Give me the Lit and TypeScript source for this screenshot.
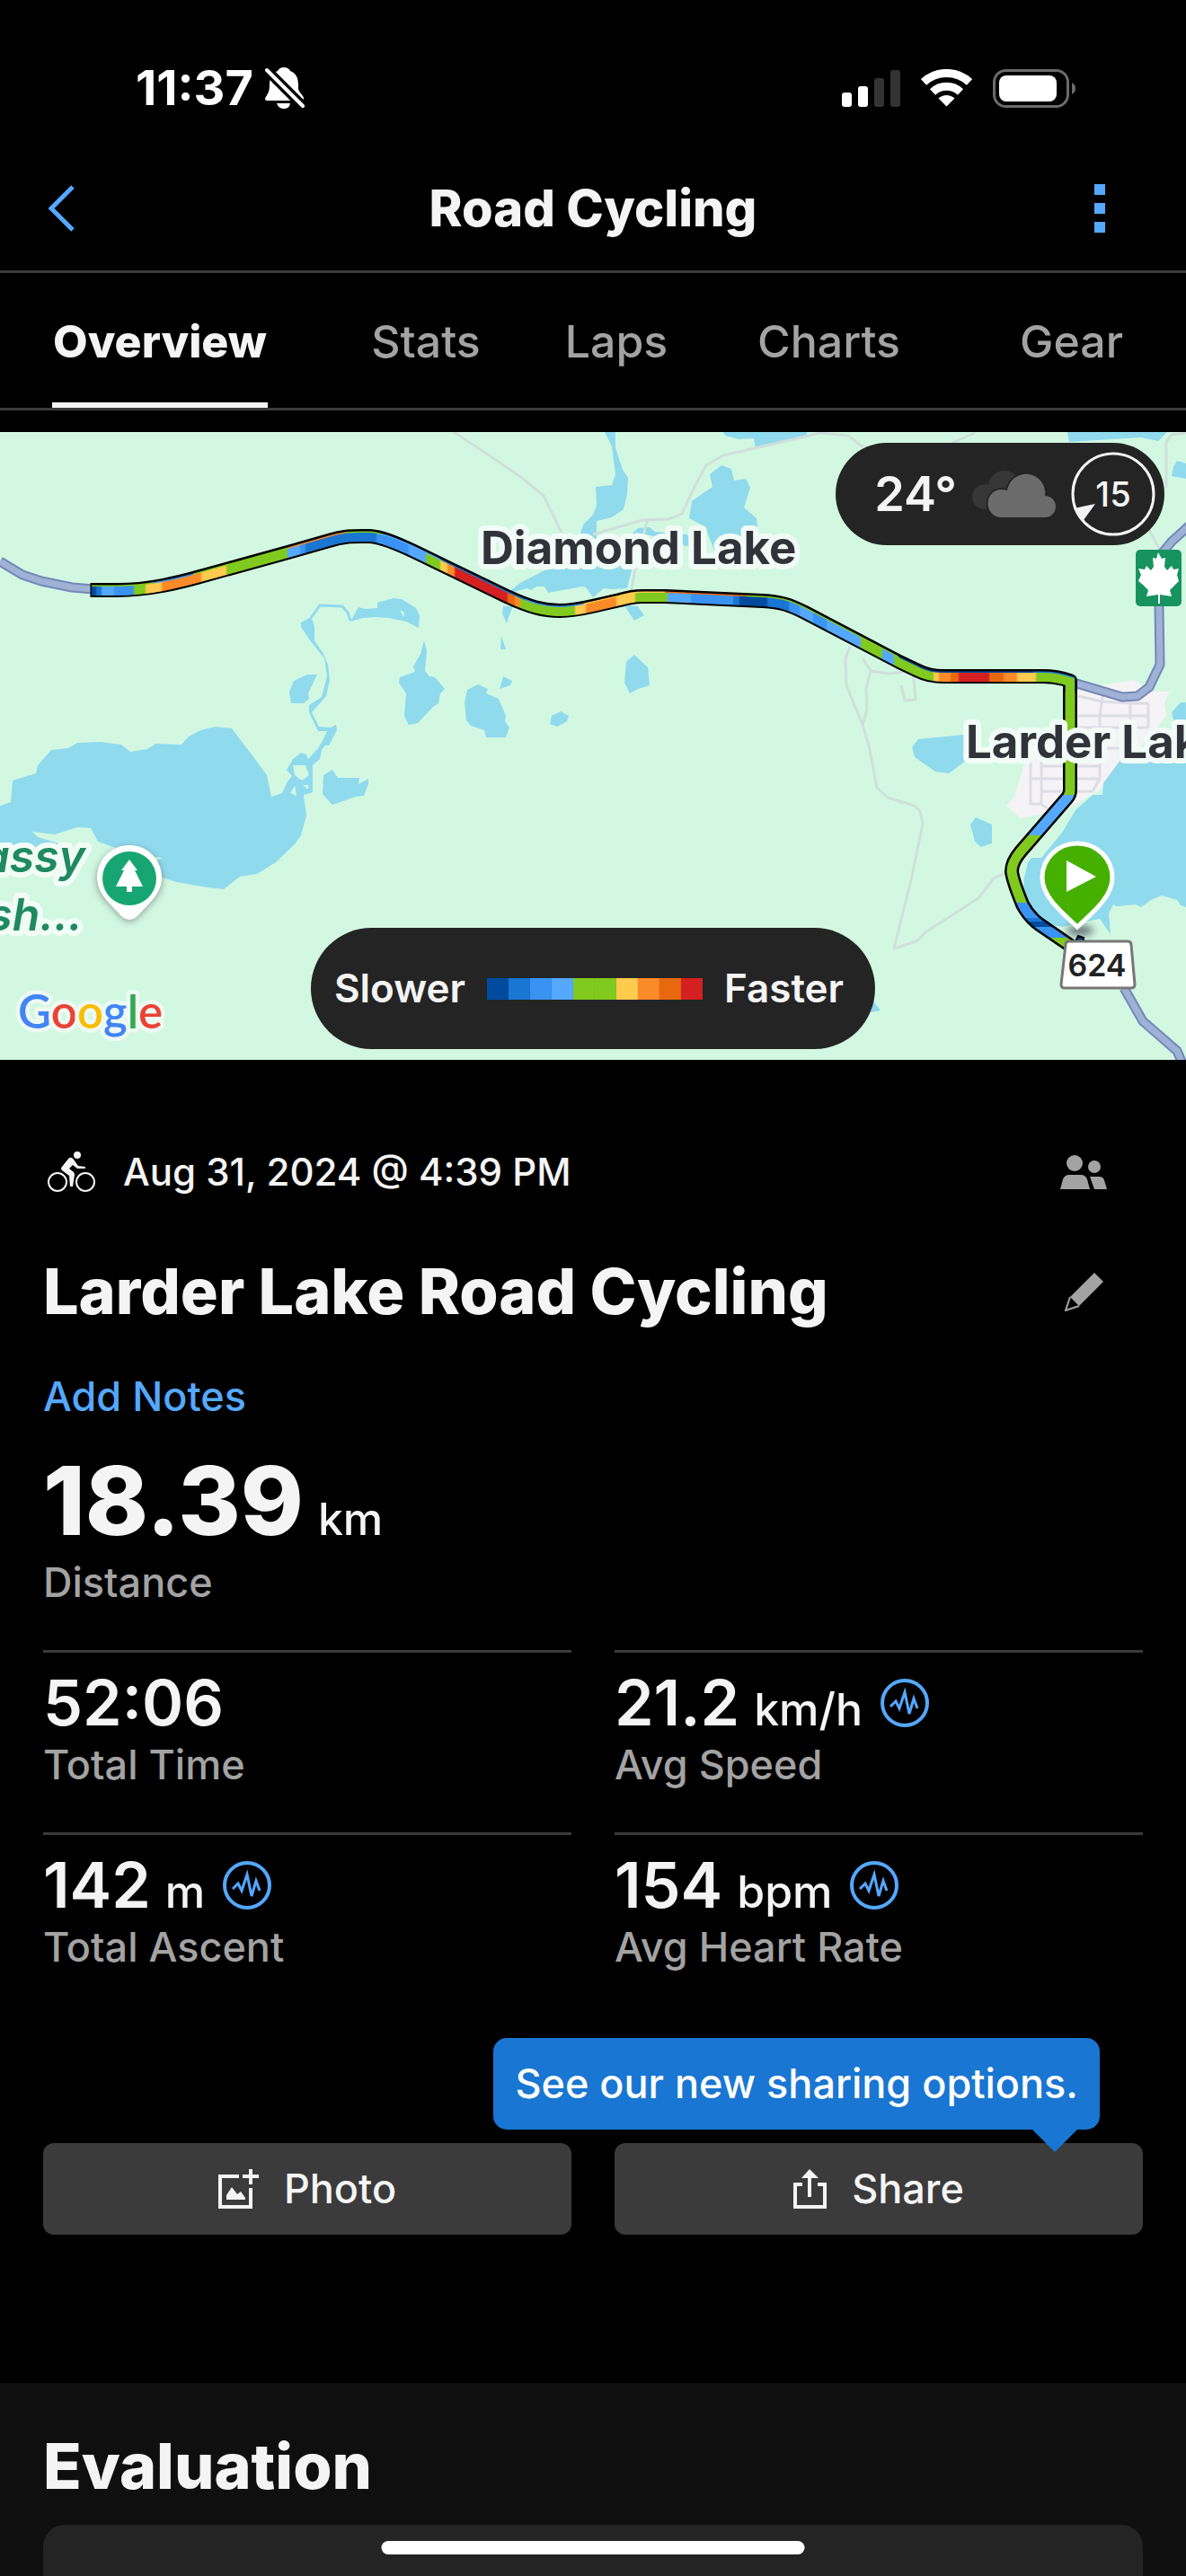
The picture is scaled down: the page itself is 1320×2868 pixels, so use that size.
import { LitElement, html, svg, css, nothing } from "lit";
import { customElement, property, state } from "lit/decorators.js";
import { classMap } from "lit/directives/class-map.js";

const WATER = [
  "0,897 12,893 14,869 40,861 42,852 57,835 76,833 86,827 112,826 135,829 145,837 164,834 173,828 202,829 210,820 223,813 240,809 258,811 267,823 280,840 297,863 302,887 314,883 320,870 325,864 319,857 326,845 335,838 341,840 343,845 354,833 362,820 370,820 358,835 356,845 348,852 348,882 338,885 341,908 335,930 328,940 307,960 286,973 267,976 249,990 231,988 196,982 181,977 170,960 181,955 162,953 126,943 109,937 101,922 86,921 61,929 36,926 42,932 65,939 60,945 0,942",
  "346,687 350,697 350,713 360,728 365,740 367,757 363,775 357,782 347,793 355,809 368,810 374,807 375,813 366,830 357,829 364,814 354,814 344,793 344,785 358,776 364,753 361,733 345,713 335,698 335,693",
  "390,692 399,676 406,678 420,677 420,671 438,666 447,667 463,677 467,685 466,699 452,692 433,688 417,687 404,688",
  "353,751 342,751 327,758 322,770 324,783 338,783 344,778 343,772",
  "472,713 475,725 473,747 478,753 484,754 495,767 490,772 488,783 482,787 465,805 455,807 450,797 452,772 444,760 445,754 462,748 460,742 468,728",
  "532,762 543,767 541,772 555,778 563,797 562,803 567,810 563,821 541,821 539,813 524,808 519,802 517,782 520,768",
  "560,753 570,758 568,763 556,767",
  "624,792 633,797 631,803 620,809 612,806 614,797",
  "558,708 563,723 557,723",
  "560,675 571,675 566,687 564,694 559,683",
  "569,657 579,649 606,635 631,630 645,622 652,600 646,593 650,583 660,573 664,563 663,542 681,540 685,528 681,497 673,481 685,481 685,498 693,523 699,532 698,550 694,567 681,576 664,580 664,600 685,615 705,627 698,655 682,656 672,655 660,665 652,654 648,653 610,660 606,653 597,653 591,657 587,655 568,660",
  "803,518 814,522 817,535 830,533 835,543 828,565 842,577 843,587 828,597 816,603 795,613 788,595 786,587 767,577 770,558 784,548 793,542 790,528",
  "700,597 710,588 723,587 729,592 765,595 770,607 763,608 748,600 728,597 708,593",
  "805,481 898,481 898,487 866,493 841,500 839,488 822,489 807,485",
  "1188,481 1299,481 1289,491 1270,487 1190,492",
  "1310,513 1320,516 1320,533 1304,530 1306,520",
  "1314,782 1320,782 1320,803 1306,802 1304,793",
  "694,673 710,675 717,685 706,691",
  "706,729 721,743 723,763 710,767 701,772 695,760 697,737",
  "1022,823 1072,818 1078,830 1075,847 1056,861 1041,859 1018,843 1015,832",
  "1086,910 1104,918 1104,939 1092,943 1085,937 1080,918",
  "1247,846 1320,846 1320,1010 1314,1008 1310,1002 1293,997 1281,1002 1270,1010 1264,1007 1243,1009 1239,1007 1234,1017 1236,1040 1224,1023 1205,1027 1182,1032 1163,1028 1148,1013 1138,997 1140,977 1144,960 1148,955 1159,955 1182,927 1197,902 1216,885 1227,885 1228,872",
  "971,1113 980,1125 969,1127",
  "370,857 376,866 400,866 399,873 410,867 410,873 405,886 396,887 370,896 359,884 360,863",
];

const ISLANDS = [
  "326,852 340,852 344,863 336,869 328,863",
  "328,875 330,886 323,883",
  "337,874 343,874 343,879",
  "445,679 450,682 449,687",
];

const STREAMS = ["346,688 356,674 381,675 387,682 390,691"];

const TRAILS = [
  "505,481 537,502 581,532 605,552 625,593",
  "660,595 715,579 744,578 759,572 774,540 786,518 805,507 866,493 913,482 944,485 961,498",
  "1060,493 1085,482",
  "1320,482 1304,484 1298,492 1298,543",
  "1279,590 1291,612",
  "702,660 707,633 721,577",
  "946,720 941,733 942,763 960,807 967,830 976,877 988,888 1018,897 1024,903 1027,917 1014,980 995,1056 1020,1048 1030,1038 1089,1000 1106,978 1119,972",
  "960,807 965,790 964,767 969,747 960,733",
  "969,747 988,750 1016,747 1019,779 1007,780 1003,763",
];

const STREETS = [
  "1200,775 1226,781 1258,783 1278,783",
  "1200,797 1278,797",
  "1200,810 1278,810",
  "1228,770 1224,797 1224,867 1216,881 1159,881",
  "1258,777 1258,825",
  "1278,783 1278,810",
  "1147,846 1147,895 1158,895 1166,900",
  "1159,846 1159,895",
  "1147,867 1224,867",
  "1159,853 1224,853",
  "1224,833 1262,833",
];

const HIGHWAYS = [
  "0,625 25,640 46,647 80,654 104,656",
  "1326,583 1304,603 1290,620 1290,675 1291,740 1279,765 1266,775 1249,776 1195,760",
  "1251,1100 1272,1137 1310,1170 1316,1184",
];

const ROUTE =
  "M102 657H130C150 657 165 655 181 652C196 649 205 647 219 643L324 614L366 602C385 596 395 597 412 597C425 598 440 604 463 615L564 664C590 676 605 680 623 680C640 680 650 677 668 673L690 668C700 665 705 664 715 664L740 664L849 669C870 670 880 674 896 682L1001 737L1022 747C1030 751 1040 753 1050 753H1161C1175 753 1185 756 1191 758V880Q1191 884 1188 888L1136 948Q1126 960 1126 970Q1127 980 1138 1007Q1146 1022 1158 1030L1196 1056";

type Stop = [number, string];

const C = {
  navy: "#004b9e",
  blue: "#1976d2",
  mid: "#3a92f2",
  sky: "#54a8ff",
  green: "#80c91f",
  yellow: "#ffca4d",
  orange: "#fb8a28",
  deep: "#e8680f",
  red: "#d42020",
};

// Each entry gives the coordinate where a colour ends.
const RETURN_LEG: Stop[] = [
  [107, C.navy], [113, C.blue], [127, C.sky], [149, C.mid], [162, C.green], [180, C.yellow],
  [224, C.orange], [252, C.yellow], [320, C.green], [334, C.sky], [340, C.mid], [419, C.blue],
  [455, C.mid], [474, C.sky], [490, C.green], [498, C.yellow], [506, C.orange], [565, C.red],
  [573, C.deep], [579, C.orange], [640, C.green], [652, C.yellow], [686, C.orange], [707, C.yellow],
  [743, C.green], [769, C.sky], [816, C.mid], [823, C.blue], [854, C.navy], [878, C.blue],
  [890, C.mid], [905, C.sky], [920, C.mid], [958, C.sky], [982, C.green], [995, C.sky],
  [1039, C.green], [1045, C.yellow], [1058, C.orange], [1067, C.deep], [1101, C.red],
  [1117, C.deep], [1132, C.orange], [1153, C.yellow], [1320, C.green],
];

const OUTWARD_LEG: Stop[] = [
  [170, C.green], [215, C.mid], [320, C.green], [385, C.orange], [425, C.green], [490, C.sky],
  [585, C.blue], [650, C.mid], [740, C.yellow], [830, C.deep], [930, C.green], [1000, C.green],
  [1150, C.navy], [1320, C.blue],
];

const SOUTH_LEG: Stop[] = [
  [885, C.green], [930, C.sky], [1005, C.green], [1022, C.mid], [1026, C.blue], [1032, C.navy],
  [1044, C.mid], [1120, C.green],
];

const stops = (list: Stop[], from: number, to: number) => {
  let prev = from;
  return list.map(([end, color]) => {
    const a = (prev - from) / (to - from);
    const b = (end - from) / (to - from);
    prev = end;
    return svg`<stop offset=${a + 0.001} stop-color=${color}></stop><stop offset=${b - 0.001} stop-color=${color}></stop>`;
  });
};

const SCALE = [C.navy, C.blue, C.mid, C.sky, C.green, C.green, C.yellow, C.orange, C.deep, C.red];

@customElement("route-map")
class RouteMap extends LitElement {
  static styles = css`
    :host {
      display: block;
      position: relative;
    }
    .canvas {
      display: block;
      width: 100%;
      height: auto;
    }
    .label {
      font-family: Inter, "Liberation Sans", sans-serif;
      paint-order: stroke;
      stroke: #f2fcf7;
      stroke-width: 12px;
      stroke-linejoin: round;
    }
    .place {
      font-size: 51px;
      font-weight: 700;
      fill: #32333a;
    }
    .park {
      font-size: 50px;
      font-weight: 600;
      font-style: italic;
      fill: #1f8a61;
    }
    .shield {
      font-family: Inter, "Liberation Sans", sans-serif;
      font-size: 34px;
      font-weight: 600;
      fill: #222;
    }
    .brand {
      font-family: Lato, "Liberation Sans", sans-serif;
      font-size: 51px;
      font-weight: 600;
      paint-order: stroke;
      stroke: #eef9f3;
      stroke-width: 9px;
      stroke-linejoin: round;
    }
    .pill {
      position: absolute;
      display: flex;
      align-items: center;
      background: #242424;
      color: #f4f4f4;
    }
    .weather {
      top: 12px;
      right: 24px;
      gap: 17px;
      padding: 10px 10px 10px 43px;
      border-radius: 58px;
    }
    .temp {
      font-size: 54px;
      line-height: 60px;
      font-weight: 600;
    }
    .wind {
      display: grid;
      place-items: center;
    }
    .wind svg,
    .wind span {
      grid-area: 1 / 1;
    }
    .wind span {
      font-size: 38px;
      line-height: 48px;
      font-weight: 500;
    }
    .legend {
      bottom: 12px;
      left: 50%;
      transform: translateX(-50%);
      gap: 24px;
      padding: 38px 35px 38px 26px;
      border-radius: 68px;
      font-size: 44px;
      line-height: 59px;
      font-weight: 600;
    }
    .scale {
      display: flex;
    }
    .scale i {
      width: 24px;
      height: 24px;
    }
    svg {
      display: block;
    }
  `;

  render() {
    return html`
      <svg class="canvas" viewBox="0 481 1320 699" role="img" aria-label="Route map">
        <defs>
          <linearGradient id="back" gradientUnits="userSpaceOnUse" x1="102" x2="1320" y1="0" y2="0">${stops(RETURN_LEG, 102, 1320)}</linearGradient>
          <linearGradient id="out" gradientUnits="userSpaceOnUse" x1="102" x2="1320" y1="0" y2="0">${stops(OUTWARD_LEG, 102, 1320)}</linearGradient>
          <linearGradient id="south" gradientUnits="userSpaceOnUse" x1="0" x2="0" y1="757" y2="1120">${stops(SOUTH_LEG, 757, 1120)}</linearGradient>
          <clipPath id="upper"><rect x="0" y="481" width="1320" height="290"></rect></clipPath>
          <clipPath id="lower"><rect x="0" y="771" width="1320" height="409"></rect></clipPath>
          <filter id="soft" x="-50%" y="-50%" width="200%" height="200%"><feGaussianBlur stdDeviation="4"></feGaussianBlur></filter>
        </defs>
        <rect y="481" width="1320" height="699" fill="#d3f8e2"></rect>
        <polygon fill="#f5f3f6" points="1191,755 1226,763 1262,757 1283,770 1302,770 1296,783 1298,797 1280,820 1262,838 1247,846 1224,880 1203,892 1182,903 1155,907 1136,911 1120,897 1129,887 1140,850 1150,820 1191,810"></polygon>
        ${WATER.map((p) => svg`<polygon fill="#90daee" points=${p}></polygon>`)}
        ${ISLANDS.map((p) => svg`<polygon fill="#d3f8e2" points=${p}></polygon>`)}
        ${STREAMS.map((p) => svg`<polyline fill="none" stroke="#90daee" stroke-width="3" points=${p}></polyline>`)}
        ${TRAILS.map((p) => svg`<polyline fill="none" stroke="#d0dfdc" stroke-width="3" stroke-linejoin="round" points=${p}></polyline>`)}
        ${STREETS.map((p) => svg`<polyline fill="none" stroke="#dddde6" stroke-width="3" points=${p}></polyline>`)}
        ${HIGHWAYS.map((p) => svg`
          <polyline fill="none" stroke="#7488b8" stroke-width="11" stroke-linejoin="round" points=${p}></polyline>
          <polyline fill="none" stroke="#9fb2d6" stroke-width="7" stroke-linejoin="round" points=${p}></polyline>`)}
        <path d=${ROUTE} fill="none" stroke="#000" stroke-width="16" stroke-linejoin="round"></path>
        <path d="M1196 1050l4-8l6 2v10z" fill="#0b3f86" stroke="#000" stroke-width="2"></path>
        <path d="M102 649v16" stroke="#000" stroke-width="3"></path>
        <g clip-path="url(#upper)" fill="none">
          <path d=${ROUTE} stroke="url(#out)" stroke-width="11"></path>
          <path d=${ROUTE} stroke="url(#back)" stroke-width="10" transform="translate(0 1)"></path>
        </g>
        <path clip-path="url(#lower)" d=${ROUTE} stroke="url(#south)" stroke-width="11" fill="none"></path>

        <text class="label place" x="535" y="628">Diamond Lake</text>
        <text class="label place" x="1075" y="844">Larder Lake</text>
        <text class="label park" x="95" y="971" text-anchor="end">assy</text>
        <text class="label park" x="92" y="1036" text-anchor="end">sh...</text>

        <g>
          <path d="M144 944c-20 0-36 16-36 35c0 12 6 20 14 28l14 15q8 7 16 0l14-15c8-8 14-16 14-28c0-19-16-35-36-35z" fill="#4b5a55" opacity="0.6" filter="url(#soft)"></path>
          <path d="M144 941c-20 0-36 16-36 36c0 12 6 20 13 28l15 16q8 6 16 0l15-16c7-8 13-16 13-28c0-20-16-36-36-36z" fill="#fff"></path>
          <circle cx="144" cy="978" r="30" fill="#17a673"></circle>
          <path d="M144 957l9 12h-3l9 18h-12v6h-6v-6h-12l9-18h-3z" fill="#fff"></path>
        </g>

        <text class="brand" x="20" y="1145"><tspan fill="#4285f4">G</tspan><tspan fill="#ea4335">o</tspan><tspan fill="#fbbc05">o</tspan><tspan fill="#4285f4">g</tspan><tspan fill="#34a853">l</tspan><tspan fill="#ea4335">e</tspan></text>

        <g>
          <rect x="1264" y="612" width="51" height="63" rx="5" fill="#17935f"></rect>
          <path d="M1289 615l4 7l4-1l-1 10l3 4l5-5l2 4l6-1l-2 7l2 7l-4 4l-6 6l2 7l-13-2v10h-2v-10l-13 2l2-7l-6-6l-5-4l3-7l-3-7l7 1l2-4l5 5l3-4l-1-10l4 1z" fill="#fff"></path>
        </g>

        <ellipse cx="1202" cy="1036" rx="15" ry="6" fill="#223" opacity="0.6" filter="url(#soft)"></ellipse>
        <path d="M1199 939c-22 0-39 17-39 38c0 19 16 34 39 55c23-21 39-36 39-55c0-21-17-38-39-38z" fill="#45b000" stroke="#fff" stroke-width="5"></path>
        <path d="M1187 958v35l33-17z" fill="#fff"></path>

        <path d="M1190 1048h65q4 0 4 4l4 44q0 4-4 4h-74q-4 0-4-4l5-44q0-4 4-4z" fill="#fff" stroke="#777" stroke-width="3"></path>
        <text class="shield" x="1221" y="1087" text-anchor="middle">624</text>
      </svg>

      <div class="pill weather">
        <span class="temp">24°</span>
        <svg width="93" height="52" viewBox="0 0 93 52" aria-label="Cloudy" role="img">
          <g fill="#363636">
            <circle cx="36" cy="18" r="18"></circle>
            <circle cx="14" cy="29" r="14"></circle>
            <rect x="14" y="22" width="30" height="21"></rect>
          </g>
          <path d="M32 52a14 15 0 0 1 0-31q4 0 7 1a21 21 0 0 1 42 6a12 12 0 0 1 0 24z" fill="#6b6b6b" stroke="#242424" stroke-width="4" paint-order="stroke"></path>
        </svg>
        <div class="wind">
          <svg width="94" height="94" viewBox="0 0 94 94" aria-hidden="true">
            <circle cx="47" cy="47" r="45" fill="none" stroke="#f4f4f4" stroke-width="3"></circle>
            <path d="M3 63l24-5l-13 18z" fill="#f4f4f4"></path>
          </svg>
          <span>15</span>
        </div>
      </div>

      <div class="pill legend">
        <span>Slower</span>
        <span class="scale">${SCALE.map((c) => html`<i style="background:${c}"></i>`)}</span>
        <span>Faster</span>
      </div>
    `;
  }
}

@customElement("metric-tile")
class MetricTile extends LitElement {
  @property() value = "";
  @property() unit = "";
  @property() label = "";
  @property({ type: Boolean }) graph = false;

  static styles = css`
    :host {
      display: block;
      border-top: 3px solid #3b3b3b;
      padding: 20px 0 45px;
    }
    .line {
      display: flex;
      align-items: center;
      gap: 20px;
      line-height: 72px;
      color: #f4f4f4;
    }
    .reading {
      display: flex;
      align-items: baseline;
      gap: 16px;
      font-size: 70px;
      font-weight: 600;
    }
    .unit {
      font-size: 50px;
      line-height: 52px;
      font-weight: 500;
    }
    .label {
      margin-top: 3px;
      font-size: 45px;
      line-height: 60px;
      font-weight: 500;
      color: #a3a3a3;
    }
    .graph {
      display: block;
      padding: 0;
      border: 0;
      background: none;
    }
    svg {
      display: block;
    }
  `;

  render() {
    return html`
      <div class="line">
        <span class="reading"><span>${this.value}</span>${this.unit ? html`<span class="unit">${this.unit}</span>` : nothing}</span>
        ${this.graph
          ? html`<button class="graph" aria-label="${this.label} chart">
              <svg width="54" height="54" viewBox="0 0 54 54" fill="none" stroke="#54a8ff">
                <circle cx="27" cy="27" r="25" stroke-width="4"></circle>
                <path d="M11 31L17 25L21 33L27 15L32 39L37 22L41 33" stroke-width="3"></path>
              </svg>
            </button>`
          : nothing}
      </div>
      <div class="label">${this.label}</div>
    `;
  }
}

@customElement("app-root")
class AppRoot extends LitElement {
  @state() private tab = "Overview";

  static styles = css`
    :host {
      display: flex;
      flex-direction: column;
      min-height: 100vh;
      background: #000;
      color: #f4f4f4;
      font-family: Inter, "Liberation Sans", sans-serif;
      position: relative;
    }
    * {
      box-sizing: border-box;
    }
    button {
      font: inherit;
      color: inherit;
      background: none;
      border: 0;
      padding: 0;
      margin: 0;
    }
    svg {
      display: block;
    }
    .status {
      display: flex;
      justify-content: space-between;
      align-items: center;
      padding: 68px 123px 0 151px;
      color: #fff;
    }
    .clock {
      display: flex;
      align-items: center;
      gap: 12px;
      font-size: 54px;
      line-height: 60px;
      font-weight: 700;
    }
    .radios {
      display: flex;
      align-items: center;
      gap: 23px;
    }
    .bar {
      display: grid;
      grid-template-columns: 1fr auto 1fr;
      align-items: center;
      padding: 72px 84px 37px 50px;
      border-bottom: 3px solid #3b3b3b;
    }
    .bar h1 {
      margin: 0;
      font-size: 56px;
      line-height: 64px;
      font-weight: 800;
      padding-left: 34px;
    }
    .more {
      justify-self: end;
    }
    .tabs {
      display: grid;
      grid-template-columns: 356fr 236fr 188fr 285fr 255fr;
      justify-items: center;
      border-bottom: 3px solid #3b3b3b;
    }
    .tab {
      padding: 46px 2px 38px;
      border-bottom: 6px solid transparent;
      font-size: 50px;
      line-height: 60px;
      font-weight: 500;
      color: #a3a3a3;
    }
    .tab.on {
      padding-left: 1px;
      padding-right: 1px;
      color: #f4f4f4;
      font-weight: 800;
      border-color: #f4f4f4;
    }
    route-map {
      margin-top: 24px;
    }
    .summary {
      display: flex;
      flex-direction: column;
      padding: 95px 48px 0;
    }
    .row {
      display: flex;
      align-items: center;
    }
    .side {
      display: grid;
      place-items: center;
      width: 52px;
      margin: 0 40px 0 auto;
    }
    .when {
      gap: 30px;
      padding-left: 5px;
      font-size: 42px;
      line-height: 60px;
      font-weight: 500;
    }
    h2 {
      margin: 0;
      font-size: 70px;
      line-height: 88px;
      font-weight: 800;
    }
    .name {
      margin-top: 59px;
    }
    .notes {
      align-self: flex-start;
      margin-top: 43px;
      font-size: 45px;
      line-height: 60px;
      font-weight: 500;
      color: #54a8ff;
      text-decoration: none;
    }
    .distance {
      display: flex;
      align-items: baseline;
      gap: 16px;
      margin-top: 34px;
      font-size: 106px;
      line-height: 104px;
      font-weight: 800;
    }
    .distance span {
      font-size: 50px;
      line-height: 52px;
      font-weight: 500;
    }
    .caption {
      margin-top: 9px;
      font-size: 45px;
      line-height: 60px;
      font-weight: 500;
      color: #a3a3a3;
    }
    .metrics {
      display: grid;
      grid-template-columns: 1fr 1fr;
      column-gap: 48px;
      margin-top: 45px;
    }
    .actions {
      display: grid;
      grid-template-columns: 1fr 1fr;
      gap: 48px;
      margin: 143px 0 165px;
    }
    .slot {
      position: relative;
      display: grid;
    }
    .action {
      display: flex;
      align-items: center;
      justify-content: center;
      gap: 28px;
      padding: 21px 0;
      border-radius: 12px;
      background: #3b3b3b;
      font-size: 45px;
      line-height: 60px;
      font-weight: 500;
    }
    .tip {
      position: absolute;
      right: 48px;
      bottom: calc(100% + 15px);
      padding: 21px 24px;
      border-radius: 15px;
      background: #1976d2;
      color: #fff;
      font-size: 45px;
      line-height: 60px;
      font-weight: 500;
      white-space: nowrap;
    }
    .tip::after {
      content: "";
      position: absolute;
      top: 100%;
      right: 25px;
      border: 25px solid transparent;
      border-top-color: #1976d2;
      border-bottom: 0;
    }
    .evaluation {
      flex: 1;
      display: flex;
      flex-direction: column;
      gap: 24px;
      padding: 52px 48px 0;
      background: #0f0f0f;
    }
    .evaluation h2 {
      line-height: 82px;
    }
    .card {
      flex: 1;
      min-height: 57px;
      border-radius: 24px 24px 0 0;
      background: #242424;
    }
    .home {
      position: absolute;
      left: 50%;
      bottom: 24px;
      width: 471px;
      height: 15px;
      transform: translateX(-50%);
      border-radius: 8px;
      background: #fff;
    }
  `;

  render() {
    return html`
      <div class="status">
        <span class="clock">
          11:37
          <svg width="45" height="47" viewBox="0 0 45 47" role="img" aria-label="Silenced">
            <path d="M22 0c-4 0-6 2-7 4c-6 2-9 8-9 14c0 7-1 10-3 13c-1 2-2 3-2 4q0 2 2 2h38q3 0 3-3c0-2-5-6-6-10c0-4 0-8-1-12c-2-5-5-7-8-8c-1-2-3-4-7-4z" fill="#fff"></path>
            <path d="M14 40h15q-1 6-7 6t-8-6z" fill="#fff"></path>
            <path d="M3 3L43 43" stroke="#000" stroke-width="11"></path>
            <path d="M3 3L43 43" stroke="#fff" stroke-width="4" stroke-linecap="round"></path>
          </svg>
        </span>
        <span class="radios">
          <svg width="65" height="41" viewBox="0 0 65 41" fill="#fff" role="img" aria-label="Signal">
            <rect y="25" width="11" height="16" rx="3"></rect>
            <rect x="18" y="18" width="11" height="23" rx="3"></rect>
            <rect x="36" y="9" width="11" height="32" rx="3" fill="#333"></rect>
            <rect x="54" width="11" height="41" rx="3" fill="#333"></rect>
          </svg>
          <svg width="57" height="42" viewBox="0 0 57 42" fill="none" stroke="#fff" stroke-width="9" role="img" aria-label="Wi-Fi">
            <path d="M3 14.400a37.500 37.500 0 0 1 51 0"></path>
            <path d="M13 25.500a22.500 22.500 0 0 1 31 0"></path>
            <path d="M19.500 32.500a13 13 0 0 1 18 0l-9 9z" fill="#fff" stroke="none"></path>
          </svg>
          <svg width="92" height="43" viewBox="0 0 92 43" role="img" aria-label="Battery">
            <rect x="1.500" y="1.500" width="82" height="40" rx="13" fill="none" stroke="#6b6b6b" stroke-width="3"></rect>
            <rect x="7" y="7" width="64" height="29" rx="8" fill="#fff"></rect>
            <path d="M88 15q4 2 4 6.500t-4 6.500z" fill="#6b6b6b"></path>
          </svg>
        </span>
      </div>

      <header class="bar">
        <button aria-label="Back">
          <svg width="36" height="52" viewBox="0 0 36 52" fill="none" stroke="#54a8ff" stroke-width="5">
            <path d="M31 2L7 26L31 50"></path>
          </svg>
        </button>
        <h1>Road Cycling</h1>
        <button class="more" aria-label="More options">
          <svg width="24" height="54" viewBox="0 0 24 54" fill="#54a8ff">
            <rect x="6" width="12" height="12"></rect>
            <rect x="6" y="21" width="12" height="12"></rect>
            <rect x="6" y="42" width="12" height="12"></rect>
          </svg>
        </button>
      </header>

      <nav class="tabs">
        ${["Overview", "Stats", "Laps", "Charts", "Gear"].map(
          (t) => html`<button class=${classMap({ tab: true, on: t === this.tab })} @click=${() => (this.tab = t)}>${t}</button>`
        )}
      </nav>

      <route-map></route-map>

      <section class="summary">
        <div class="row when">
          <svg width="54" height="46" viewBox="0 0 54 46" role="img" aria-label="Cycling">
            <g fill="none" stroke="#f4f4f4" stroke-width="2">
              <circle cx="11" cy="34" r="10"></circle>
              <circle cx="42" cy="34" r="10"></circle>
            </g>
            <g fill="#f4f4f4">
              <circle cx="33" cy="4" r="4"></circle>
              <path d="M24 7Q27 6 29 9L34 16L42 17V19L33 19L28 15L24 19L29 23Q30 24 30 26L28 39H25L24 27L16 21Q14 19 16 17Z"></path>
            </g>
          </svg>
          <span>Aug 31, 2024 @ 4:39 PM</span>
          <button class="side" aria-label="Privacy">
            <svg width="52" height="38" viewBox="0 0 52 38" fill="#a3a3a3">
              <circle cx="16" cy="9" r="9"></circle>
              <circle cx="38" cy="13" r="7"></circle>
              <path d="M0 38l3-11q2-5 7-5h13q5 0 7 5l3 11z"></path>
              <path d="M33 24h10q5 0 6 4l3 10h-14z"></path>
            </svg>
          </button>
        </div>
        <div class="row name">
          <h2>Larder Lake Road Cycling</h2>
          <button class="side" aria-label="Edit name">
            <svg width="43" height="43" viewBox="0 0 43 43" fill="#a3a3a3">
              <path d="M33 0L43 10L16 37L6 27Z"></path>
              <path d="M6 27L1 42L16 37" fill="none" stroke="#a3a3a3" stroke-width="2"></path>
            </svg>
          </button>
        </div>
        <a class="notes" href="#notes">Add Notes</a>
        <div class="distance">18.39<span>km</span></div>
        <div class="caption">Distance</div>

        <div class="metrics">
          <metric-tile value="52:06" label="Total Time"></metric-tile>
          <metric-tile value="21.2" unit="km/h" label="Avg Speed" graph></metric-tile>
          <metric-tile value="142" unit="m" label="Total Ascent" graph></metric-tile>
          <metric-tile value="154" unit="bpm" label="Avg Heart Rate" graph></metric-tile>
        </div>

        <div class="actions">
          <button class="action">
            <svg width="45" height="44" viewBox="0 0 45 44" fill="none" stroke="#f4f4f4" stroke-width="4" aria-hidden="true">
              <path d="M23 8H2V42H36V21"></path>
              <path d="M36 0V17M27 8H45"></path>
              <path d="M9 34V29L15 20L21 28L25 25L30 32V34Z" fill="#f4f4f4" stroke="none"></path>
            </svg>
            Photo
          </button>
          <div class="slot">
            <button class="action">
              <svg width="37" height="44" viewBox="0 0 37 44" fill="none" stroke="#f4f4f4" stroke-width="4" aria-hidden="true">
                <path d="M10 17H2V42H35V17H27"></path>
                <path d="M18 4V31"></path>
                <path d="M18 0L28 10H9Z" fill="#f4f4f4" stroke="none"></path>
              </svg>
              Share
            </button>
            <div class="tip" role="tooltip">See our new sharing options.</div>
          </div>
        </div>
      </section>

      <section class="evaluation">
        <h2>Evaluation</h2>
        <div class="card"></div>
      </section>
      <div class="home"></div>
    `;
  }
}
